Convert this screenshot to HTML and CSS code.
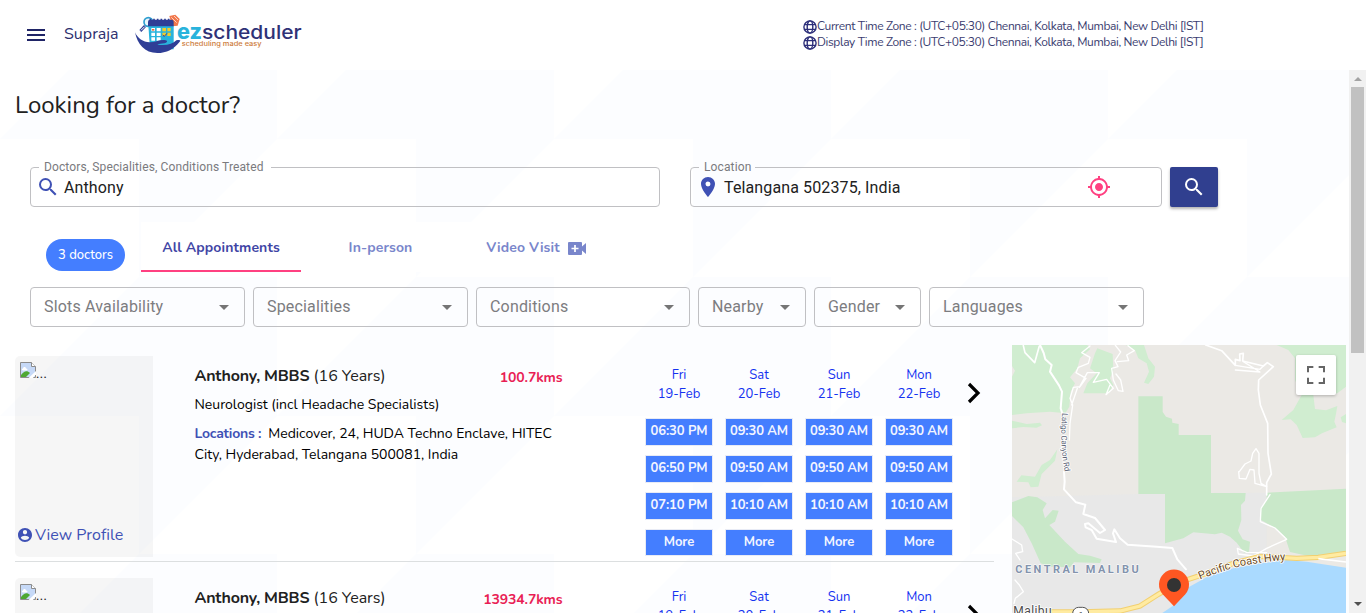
FILE: index.html
```html
<!DOCTYPE html>
<html lang="en">
<head>
<meta charset="utf-8">
<title>ezscheduler</title>
<link rel="stylesheet" href="styles.css">
</head>
<body>
<svg class="defs" width="0" height="0" aria-hidden="true">
  <symbol id="globe" viewBox="0 0 14 14"><g fill="none" stroke="#2d2f7a" stroke-width="1.4"><circle cx="7" cy="7" r="6.1"/><ellipse cx="7" cy="7" rx="2.8" ry="6.1"/><path d="M1.500 4.600h11M1.500 9.400h11"/></g></symbol>
  <symbol id="search" viewBox="0 0 24 24"><path d="M15.5 14h-.79l-.28-.27A6.47 6.47 0 0 0 16 9.5 6.5 6.5 0 1 0 9.5 16c1.61 0 3.09-.59 4.23-1.57l.27.28v.79l5 4.99L20.49 19l-4.99-5zm-6 0C7.01 14 5 11.99 5 9.5S7.01 5 9.5 5 14 7.01 14 9.5 11.99 14 9.5 14z"/></symbol>
  <symbol id="broken" viewBox="0 0 16 16"><path d="M.5.5h11l4 4v11H.5z" fill="#c6d9f7" stroke="#8c8c8c"/><path d="M11.5.5v4h4" fill="#fff" stroke="#8c8c8c"/><path d="M3 6.500c0-2 3-2 3 0 2 0 2 2 0 2H3c-1.500 0-1.500-2 0-2z" fill="#fff"/><path d="M1 15v-2c3-4 6-5 9-2l-4 4z" fill="#4ea832"/><path d="M8 16.500l8.500-8v3l-4 5z" fill="#fff"/></symbol>
  <symbol id="person" viewBox="2 2 20 20"><path d="M12 2C6.480 2 2 6.480 2 12s4.480 10 10 10 10-4.480 10-10S17.520 2 12 2zm0 3c1.660 0 3 1.340 3 3s-1.340 3-3 3-3-1.340-3-3 1.340-3 3-3zm0 14.200c-2.500 0-4.710-1.280-6-3.220.03-1.990 4-3.080 6-3.080 1.990 0 5.970 1.090 6 3.080-1.290 1.940-3.500 3.220-6 3.220z"/></symbol>
  <symbol id="chevron" viewBox="0 0 14 22"><path d="M2 2l9 9-9 9" fill="none" stroke="#000" stroke-width="3.200"/></symbol>
</svg>

<header class="topbar">
  <div class="burger"><i></i><i></i><i></i></div>
  <span class="user">Supraja</span>
  <svg class="logo" viewBox="0 0 540 150" width="180" height="50">
    <circle cx="55" cy="36" r="13" fill="#e9f6fc" stroke="#2f9fd0" stroke-width="5"/>
    <path d="M45 48L31 63" stroke="#2f3e96" stroke-width="8"/><path d="M44 50L33 61" stroke="#fff" stroke-width="3"/>
    <path d="M118 18l18-4 13 13-6 20-16 2z" fill="#f2774b"/><path d="M124 22l16 16M132 18l12 12" stroke="#fff" stroke-width="2"/>
    <path d="M55 46h76v72H60z" fill="#29b3dc"/>
    <path d="M54 35q0-6 6-6h64q7 0 7 6v14H54z" fill="#2f3e96"/>
    <path d="M61 26v8M72 26v8M83 26v8M94 26v8M105 26v8M116 26v8" stroke="#2f3e96" stroke-width="5"/>
    <path d="M64 54h11v10H64zM80 54h12v10H80zM64 68h11v10H64zM80 68h12v10H80zM64 82h11v10H64zM80 82h12v10H80z" fill="#fff"/>
    <path d="M97 54h11v10H97zM112 54h10v10h-10zM97 68h11v10H97zM112 68h10v10h-10z" fill="#f3cd2c"/><path d="M66 57h7v5h-7z" fill="#ee6b3d"/><path d="M98 75l5 4 8-9" fill="none" stroke="#2f3e96" stroke-width="3"/>
    <path d="M15 67c8 18 24 29 44 30 16 0 28-8 44-7 12 1 10 8 0 10-9 2-14 1-21 4 25 4 46-1 57-13 12-3 14 0 10 4-16 22-40 34-67 34-38 0-60-26-67-62z" fill="#2f3e96"/>
    <text class="logo-ez" x="141" y="88" textLength="75" lengthAdjust="spacingAndGlyphs">ez</text>
    <text class="logo-name" x="216" y="88" textLength="299" lengthAdjust="spacingAndGlyphs">scheduler</text>
    <text class="logo-tag" x="155" y="107" textLength="240" lengthAdjust="spacingAndGlyphs">scheduling made easy</text>
  </svg>
  <div class="zones">
    <div><svg><use href="#globe"/></svg><span>Current Time Zone : (UTC+05:30) Chennai, Kolkata, Mumbai, New Delhi [IST]</span></div>
    <div><svg><use href="#globe"/></svg><span>Display Time Zone : (UTC+05:30) Chennai, Kolkata, Mumbai, New Delhi [IST]</span></div>
  </div>
</header>

<div class="viewport">
<main class="page">
  <h1>Looking for a doctor?</h1>
  <div class="searchrow">
    <fieldset class="field field-doctor"><legend>Doctors, Specialities, Conditions Treated</legend><div><svg class="ic-search"><use href="#search"/></svg><span>Anthony</span></div></fieldset>
    <fieldset class="field field-location"><legend>Location</legend><div>
      <svg class="ic-pin" viewBox="5 2 14 20"><path d="M12 2C8.130 2 5 5.130 5 9c0 5.250 7 13 7 13s7-7.750 7-13c0-3.870-3.130-7-7-7zm0 9.500a2.500 2.500 0 0 1 0-5 2.500 2.500 0 0 1 0 5z"/></svg>
      <span>Telangana 502375, India</span>
      <svg class="ic-gps" viewBox="1 1 22 22"><path d="M12 8c-2.210 0-4 1.790-4 4s1.790 4 4 4 4-1.790 4-4-1.790-4-4-4zm8.940 3A8.994 8.994 0 0 0 13 3.060V1h-2v2.060A8.994 8.994 0 0 0 3.060 11H1v2h2.060A8.994 8.994 0 0 0 11 20.940V23h2v-2.060A8.994 8.994 0 0 0 20.940 13H23v-2h-2.060zM12 19c-3.870 0-7-3.130-7-7s3.130-7 7-7 7 3.130 7 7-3.130 7-7 7z"/></svg>
    </div></fieldset>
    <button class="go"><svg><use href="#search"/></svg></button>
  </div>

  <div class="tabrow">
    <span class="pill">3 doctors</span>
    <nav class="tabs">
      <a class="tab active">All Appointments</a>
      <a class="tab">In-person</a>
      <a class="tab video"><span>Video Visit</span><svg viewBox="0 0 18 13"><path d="M1 0h12q1 0 1 1v3.500L18 1v11l-4-3.500V12q0 1-1 1H1q-1 0-1-1V1q0-1 1-1z"/><path d="M7 3v7M3.500 6.500h7" stroke="#fff" stroke-width="1.700"/></svg></a>
    </nav>
  </div>

  <div class="filters">
    <div class="select"><span>Slots Availability</span><i></i></div>
    <div class="select"><span>Specialities</span><i></i></div>
    <div class="select w214"><span>Conditions</span><i></i></div>
    <div class="select w108"><span>Nearby</span><i></i></div>
    <div class="select w107"><span>Gender</span><i></i></div>
    <div class="select"><span>Languages</span><i></i></div>
  </div>

  <div class="results">
    <section class="list">
      <article class="doctor">
        <div class="photo"><div class="missing"><svg><use href="#broken"/></svg>...</div><a class="profile"><svg><use href="#person"/></svg>View Profile</a></div>
        <div class="info">
          <div class="nameline"><p class="name"><b>Anthony, MBBS</b> (16 Years)</p><span class="dist">100.7kms</span></div>
          <p class="speciality">Neurologist (incl Headache Specialists)</p>
          <p class="address"><b>Locations :</b>Medicover, 24, HUDA Techno Enclave, HITEC<br>City, Hyderabad, Telangana 500081, India</p>
        </div>
        <div class="slots">
          <div class="day"><p>Fri<br>19-Feb</p><a>06:30 PM</a><a>06:50 PM</a><a>07:10 PM</a><a class="more">More</a></div>
          <div class="day"><p>Sat<br>20-Feb</p><a>09:30 AM</a><a>09:50 AM</a><a>10:10 AM</a><a class="more">More</a></div>
          <div class="day"><p>Sun<br>21-Feb</p><a>09:30 AM</a><a>09:50 AM</a><a>10:10 AM</a><a class="more">More</a></div>
          <div class="day"><p>Mon<br>22-Feb</p><a>09:30 AM</a><a>09:50 AM</a><a>10:10 AM</a><a class="more">More</a></div>
        </div>
        <svg class="next"><use href="#chevron"/></svg>
      </article>
      <article class="doctor">
        <div class="photo"><div class="missing"><svg><use href="#broken"/></svg>...</div></div>
        <div class="info">
          <div class="nameline"><p class="name"><b>Anthony, MBBS</b> (16 Years)</p><span class="dist">13934.7kms</span></div>
        </div>
        <div class="slots">
          <div class="day"><p>Fri<br>19-Feb</p></div>
          <div class="day"><p>Sat<br>20-Feb</p></div>
          <div class="day"><p>Sun<br>21-Feb</p></div>
          <div class="day"><p>Mon<br>22-Feb</p></div>
        </div>
        <svg class="next"><use href="#chevron"/></svg>
      </article>
    </section>

    <svg class="map" viewBox="36 45 1002 804" width="334" height="268">
      <rect x="36" y="45" width="1002" height="804" fill="#ebe9e5"/>
      <path d="M36 502L420 492L495 489L800 488V849H36z" fill="#e8e8e8"/>
      <g fill="#d0edd0">
        <path d="M36 45H262L270 58L240 85L232 115L210 142L225 160L212 185L208 230L196 250L150 245L80 250L36 255V140L45 122L36 108z"/>
        <path d="M292 55L338 72L340 120L330 145L340 165L325 190L250 190L262 160L290 130L270 115L285 70z"/>
        <path d="M378 45H432L445 85L465 110L462 140L445 162L432 158L447 125L440 100L415 85L405 60z"/>
        <path d="M36 272L80 282L120 278L126 286L110 293L70 291L36 295z"/>
        <path d="M172 358L165 392L125 432L115 470L92 472L85 457L50 455L64 436L105 440L125 405L150 390z"/>
        <path d="M830 45H1038V170L1012 190L940 195L945 237L978 241L1012 228L1008 252L1003 275L1010 292L966 310L945 322L908 324L890 285L872 268L845 270L880 240L905 195L885 150L885 85L865 60z"/>
        <path d="M1038 252L1022 262L1026 276L1038 280z"/>
      </g>
      <g fill="#c9e8c9">
        <path d="M415 199H488V246L498 260L516 266L517 278L536 282V315H633V489H737L735 512L723 525L724 570L714 602L728 628L750 635L747 665L733 668L710 638L690 620L665 608L645 613L580 607L550 625L495 640V492H415z"/>
        <path d="M800 488L1038 476V667L925 678L870 666L855 620L825 594L783 570L781 535L800 510z"/>
        <path d="M36 517L85 498L112 502L140 520L128 540L135 565L158 540L176 542L165 575L148 585L195 635L235 672L270 677L305 688L300 699L222 697L210 712L150 710L122 700L95 640L70 592L36 558z"/>
      </g>
      <path d="M487 849L530 820L560 775L620 742L700 715L785 700L860 690L920 695L1038 713V849z" fill="#aadaff"/>
      <g fill="none" stroke="#fff" stroke-linejoin="round" stroke-linecap="round">
        <path stroke-width="6" d="M121 47L131 69L136 88L155 105L150 125L177 166L186 185L182 235L187 250M192 425L194 455L192 478L228 517L256 524L250 552L285 564L315 600L300 609L265 580L255 582L257 592L275 600L290 626L348 636L339 610L343 598L360 625L383 644L470 650L517 654L532 688L558 718"/>
        <path stroke-width="5" d="M70 47L75 68L104 98L118 48"/>
        <path stroke-width="4" d="M270 48L245 68L270 82L265 100L235 112L228 128L258 145L240 170L220 172L210 205L218 225L210 280L208 330M215 225L232 175M238 172L262 128L298 128L280 157L320 148L340 175L318 194L330 165M346 46L362 66L345 92L354 110L335 115L340 150L355 182L369 184L362 150L348 132M384 47L403 62L380 75L386 92L352 95"/>
        <path stroke-width="5" d="M617 45L665 62L706 106L706 88L720 92L719 72L730 70L728 93L790 108L802 98L820 110L776 150L775 180L781 225L803 280L804 370L814 432L800 458L800 495"/>
        <path stroke-width="4" d="M706 120L780 126L730 95M706 106L780 118L790 108M718 425L735 402L753 393L758 370L768 356L777 370L777 430L783 460L800 470L765 460L762 420L750 418L738 447L718 445L716 425M810 494L783 535L781 575L825 594L860 628L800 655L760 678L715 672L712 655L740 667L800 668M36 627L65 645L68 665L47 670L60 690M45 750L58 765L70 785L46 805L42 820"/>
      </g>
      <path d="M150 846L240 846L360 843L420 828L475 793L535 758L620 730L700 700L780 679L890 685L955 682L1038 670" fill="none" stroke="#f2d071" stroke-width="16"/>
      <path d="M150 846L240 846L360 843L420 828L475 793L535 758L620 730L700 700L780 679L890 685L955 682L1038 670" fill="none" stroke="#ffeba1" stroke-width="10"/>
      <path d="M955 686L1038 696" stroke="#fff" stroke-width="5"/>
      <path id="hwy" d="M600 749Q690 712 762 701T880 690" fill="none"/>
      <path id="latigo" d="M187 248Q178 340 195 430" fill="none"/>
      <text class="map-hwy"><textPath href="#hwy" textLength="264">Pacific Coast Hwy</textPath></text>
      <text class="map-road"><textPath href="#latigo" textLength="178">Latigo Canyon Rd</textPath></text>
      <text class="map-area" x="46" y="729" textLength="370">CENTRAL MALIBU</text>
      <text class="map-town" x="40" y="854" textLength="115">Malibu</text>
      <rect x="218" y="832" width="48" height="40" rx="18" fill="#fff" stroke="#555" stroke-width="3"/><text class="map-shield" x="236" y="861">1</text>
      <path d="M522 829L488 793A45 45 0 1 1 556 793z" fill="#ff5722"/><circle cx="522" cy="765" r="21" fill="#333"/>
      <rect class="map-button" x="888" y="75" width="120" height="120" rx="6"/>
      <path d="M924 127V111H940M956 111H972V127M972 143V159H956M940 159H924V143" fill="none" stroke="#666" stroke-width="6"/>
    </svg>
  </div>
</main>
<div class="scrollbar"><i class="up"></i><div class="thumb"></div><i class="down"></i></div>
</div>
</body>
</html>
```

FILE: styles.css
```css
* { box-sizing: border-box; }
body { margin: 0; height: 613px; overflow: hidden; background: #fff; font-family: Nunito, Lato, sans-serif; color: #212121; }
p, h1 { margin: 0; }
.defs { display: block; }

.topbar { height: 70px; display: flex; background: #fff; color: #2d2f6e; }
.burger { display: flex; flex-direction: column; gap: 3px; margin: 29px 0 0 27px; width: 18px; }
.burger i { height: 2px; background: #1f2466; }
.user { margin: 24px 0 0 19px; width: 66px; font-size: 16px; line-height: 21px; white-space: nowrap; }
.logo { margin: 10px 0 0; flex: none; }
.logo-ez { font: 800 63px Inter, sans-serif; fill: #29b3dc; }
.logo-name { font: 500 58px Inter, sans-serif; fill: #2f3277; }
.logo-tag { font: 500 20px Inter, sans-serif; fill: #cd7c3b; }
.burger i:nth-child(n) { flex: none; }
.burger { gap: 3px; }
.zones { margin: 18px 0 0 493px; font-size: 12px; line-height: 16px; letter-spacing: -.365px; color: #3b3d70; white-space: nowrap; }
.zones div { display: flex; height: 16px; }
.zones svg { width: 14px; height: 14px; margin: 2px 0 0; }

.viewport { display: flex; height: 543px; overflow: hidden; }
.page {
  width: 1349px; height: 543px; overflow: hidden; padding: 0 0 0 15px;
  background: url("data:image/svg+xml,%3Csvg xmlns='http://www.w3.org/2000/svg' width='277' height='277'%3E%3Cpath d='M139 0H277V139L139 277V139H0z' fill='%23fcfdff'/%3E%3C/svg%3E") 0 -70px #fff;
}
h1 { padding-top: 20px; height: 90px; font-weight: 400; font-size: 24px; line-height: 30px; white-space: nowrap; }

.searchrow { display: flex; padding-left: 15px; height: 47px; align-items: flex-end; }
.field { font-family: Roboto, sans-serif; min-width: 0; margin: 0; padding: 0 0 0 8px; height: 47px; border: 1px solid #c0c0c3; border-radius: 4px; }
.field legend { height: 14px; padding: 0 5px; font-size: 12px; line-height: 14px; letter-spacing: .12px; color: #7a7a7e; white-space: nowrap; }
.field > div { display: flex; align-items: center; height: 26px; font-size: 16px; letter-spacing: .12px; color: #212121; white-space: nowrap; }
.field-doctor { width: 630px; margin-right: 30px; }
.field-doctor legend { width: 232px; }
.field-location { width: 472px; margin-right: 8px; }
.field-location legend { width: 56px; }
.ic-search { width: 24px; height: 24px; fill: #3f51b5; margin: 0 4px 0 -3px; }
.ic-pin { width: 14px; height: 20px; fill: #3f51b5; margin: 0 9px 0 2px; }
.ic-gps { width: 22px; height: 22px; fill: #ff4081; margin-left: auto; margin-right: 51px; }
.go { width: 48px; height: 40px; padding: 0; border: 0; border-radius: 2px; background: #303f8f; box-shadow: 0 2px 3px rgba(0,0,0,.3); }
.go svg { width: 24px; height: 24px; fill: #fff; display: block; margin: auto; }

.tabrow { display: flex; padding: 15px 0 0 31px; height: 65px; }
.pill { width: 79px; height: 32px; margin: 17px 16px 0 0; border-radius: 16px; background: #447eff; color: #fff; font-size: 13px; font-weight: 500; line-height: 32px; text-align: center; letter-spacing: 0; }
.tabs { display: flex; height: 50px; background: #fff; }
.tab { width: 159px; text-align: center; font-size: 14px; font-weight: 700; line-height: 52px; color: #7986cb; letter-spacing: .12px; white-space: nowrap; }
.tab.active { width: 160px; color: #3f45a5; border-bottom: 2px solid #ff4081; }
.tab.video { display: flex; justify-content: center; align-items: center; gap: 8px; width: 152px; padding-top: 2px; }
.video svg { width: 18px; height: 13px; fill: #7986cb; }

.filters { display: flex; gap: 8px; margin: 15px 0 0 15px; height: 40px; }
.select { display: flex; justify-content: space-between; align-items: center; width: 215px; height: 40px; padding: 0 15px 2px 13px; border: 1px solid #c0c0c3; border-radius: 4px; font-family: Roboto, sans-serif; font-size: 16px; letter-spacing: .17px; color: #7c7c80; }
.select i { border: 5px solid transparent; border-top-color: #757575; border-bottom: 0; margin-top: 3px; }
.w214 { width: 214px; }
.w108 { width: 108px; }
.w107 { width: 107px; }

.results { display: flex; margin-top: 18px; }
.list { width: 979px; margin-right: 18px; }
.doctor { display: flex; height: 222px; padding-top: 11px; }
.doctor:first-child { height: 217px; border-bottom: 1px solid #dcdfe0; }
.doctor + .doctor { padding-top: 16px; }
.photo { width: 138px; height: 201px; padding: 5px 3px; border-radius: 5px 0 0 5px; background: rgba(0,0,0,.035); display: flex; flex-direction: column; justify-content: space-between; }
.missing { display: flex; margin-left: 2px; font-size: 14px; line-height: 26px; letter-spacing: .5px; }
.missing svg { width: 16px; height: 16px; margin-top: 1px; }
.profile { display: flex; align-items: center; height: 22px; margin-bottom: 6px; gap: 3px; color: #3f51b5; font-size: 16px; letter-spacing: .05px; white-space: nowrap; }
.profile svg { width: 14px; height: 14px; fill: #3f51b5; }
.info { width: 368px; margin-left: 41.500px; padding-top: 10px; white-space: nowrap; }
.nameline { display: flex; justify-content: space-between; height: 28px; line-height: 20px; }
.name { font-size: 16px; }
.name b { letter-spacing: -.2px; }
.dist { padding-top: 2px; color: #e91e55; font-size: 14px; font-weight: 700; letter-spacing: -.12px; }
.speciality { font-size: 14px; line-height: 21px; color: #000; }
.address { margin-top: 8px; font-size: 14px; line-height: 21px; color: #000; }
.address b { color: #3f51b5; margin-right: 7px; letter-spacing: -.26px; }
.slots { display: flex; gap: 12px; margin-left: 82.500px; }
.day { width: 68px; padding-top: 10px; }
.day p { height: 52px; text-align: center; font-size: 13px; line-height: 19px; color: #1432f0; }
.day a { display: block; height: 28px; margin-bottom: 9px; border: 1px solid #e8ebf5; background: #447eff; color: #f3f5ff; font-size: 13px; font-weight: 700; line-height: 25px; letter-spacing: -.1px; text-align: center; white-space: nowrap; }
.day a.more { height: 27px; margin: 0; }
.next { width: 14px; height: 22px; margin: 26px 0 0 14px; }

.map { flex: none; display: block; }
.map text { paint-order: stroke; stroke: #fff; stroke-width: 5px; stroke-linejoin: round; font-family: Roboto, sans-serif; }
.map-hwy { font-size: 33px; fill: #6b4a1b; }
.map-road { font-size: 24px; fill: #5b6475; }
.map text.map-area { font-size: 33px; font-weight: 700; fill: #8393ad; stroke-width: 3px; }
.map-town { font-size: 36px; fill: #4c4c4c; }
.map-shield { font-size: 24px; fill: #333; }
.map-button { fill: #fff; filter: drop-shadow(0 3px 4px rgba(0,0,0,.25)); }

.scrollbar { width: 17px; height: 543px; display: flex; flex-direction: column; align-items: center; background: #f1f1f1; }
.scrollbar i { width: 8px; border: 4px solid transparent; }
.scrollbar .up { margin-top: 7px; border-top: 0; border-bottom-color: #a3a3a3; }
.thumb { width: 13px; height: 266px; margin-top: 6px; background: #c1c1c1; }
.scrollbar .down { margin: auto 0 7px; border-bottom: 0; border-top-color: #505050; }
```
